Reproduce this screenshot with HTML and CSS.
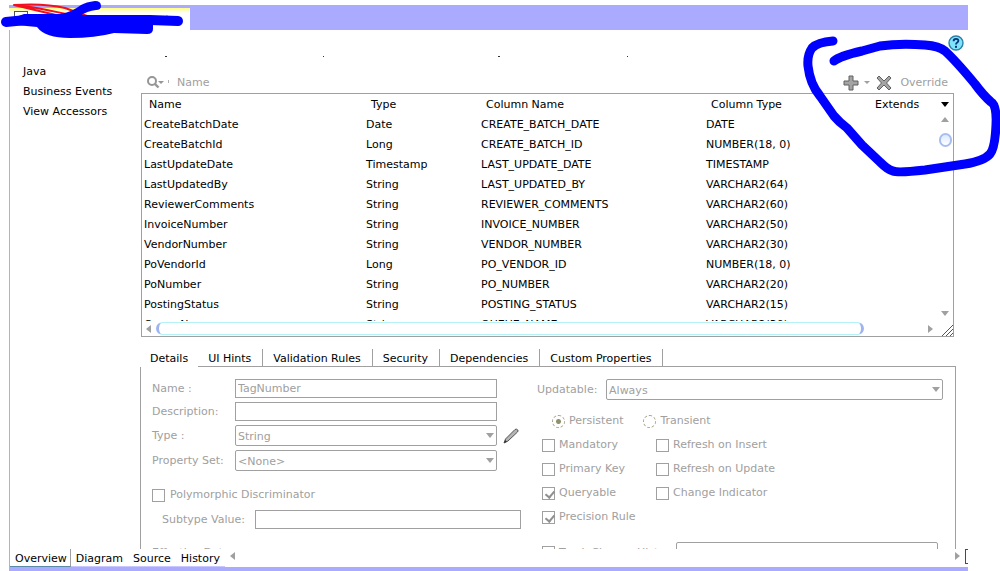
FILE: index.html
```
<!DOCTYPE html>
<html lang="en">
<head>
    <meta charset="UTF-8">
    <title>Entity Object Editor</title>
    <link rel="stylesheet" href="styles.css">
</head>
<body>
    <div class="editor">
        <header class="title-bar">
            <div class="file-tab">
                <svg width="14" height="14" viewBox="0 0 14 14"><rect x="0.5" y="0.5" width="13" height="13" fill="#fff" stroke="#555"/></svg>
            </div>
        </header>

        <main class="page">
            <div class="page-head">
                <button class="icon-btn" aria-label="Help">
                    <svg width="16" height="16" viewBox="0 0 16 16">
                        <circle cx="8" cy="8" r="7" fill="#7fe4fa" stroke="#2b7fa8" stroke-width="1.4"/>
                        <path d="M5.6 6.2Q5.6 3.8 8 3.8Q10.4 3.8 10.4 5.8Q10.4 7 9 7.7Q8 8.2 8 9.6" fill="none" stroke="#06357a" stroke-width="1.8"/>
                        <rect x="7" y="10.8" width="2" height="2" fill="#06357a"/>
                    </svg>
                </button>
            </div>

            <div class="columns">
                <nav class="sections">
                    <a href="#java">Java</a>
                    <a href="#events">Business Events</a>
                    <a href="#accessors">View Accessors</a>
                </nav>

                <div class="content">
                    <div class="toolbar">
                        <button class="icon-btn" aria-label="Search by">
                            <svg width="26" height="16" viewBox="0 0 26 16">
                                <circle cx="6" cy="6" r="4" fill="none" stroke="#969696" stroke-width="2"/>
                                <path d="M9 9L12.5 12.5" stroke="#969696" stroke-width="2.4"/>
                                <path d="M12 6H18L15 9Z" fill="#969696"/>
                                <path d="M22.5 5V8" stroke="#b0b0b0"/>
                            </svg>
                        </button>
                        <span class="search-hint">Name</span>
                        <button class="icon-btn" aria-label="Add">
                            <svg width="28" height="16" viewBox="0 0 28 16">
                                <path d="M6 1H10V6H15V10H10V15H6V10H1V6H6Z" fill="#a4a4a4" stroke="#606060"/>
                                <path d="M21 6H27L24 9Z" fill="#a0a0a0"/>
                            </svg>
                        </button>
                        <button class="icon-btn" aria-label="Remove">
                            <svg width="16" height="16" viewBox="0 0 16 16">
                                <path d="M1 3L3 1L8 6L13 1L15 3L10.5 8L15 13L13 15L8 10L3 15L1 13L5.5 8Z" fill="#a4a4a4" stroke="#606060"/>
                            </svg>
                        </button>
                        <button class="text-btn" disabled>Override</button>
                    </div>

                    <div class="grid-box">
                        <div class="grid-main">
                            <div class="rows">
                                <table class="attributes">
                                    <colgroup>
                                        <col class="col-name"><col class="col-type"><col class="col-column"><col class="col-sql"><col>
                                    </colgroup>
                                    <thead>
                                        <tr><th>Name</th><th>Type</th><th>Column Name</th><th>Column Type</th><th>Extends</th></tr>
                                    </thead>
                                    <tbody>
                                        <tr><td>CreateBatchDate</td><td>Date</td><td>CREATE_BATCH_DATE</td><td>DATE</td><td></td></tr>
                                        <tr><td>CreateBatchId</td><td>Long</td><td>CREATE_BATCH_ID</td><td>NUMBER(18, 0)</td><td></td></tr>
                                        <tr><td>LastUpdateDate</td><td>Timestamp</td><td>LAST_UPDATE_DATE</td><td>TIMESTAMP</td><td></td></tr>
                                        <tr><td>LastUpdatedBy</td><td>String</td><td>LAST_UPDATED_BY</td><td>VARCHAR2(64)</td><td></td></tr>
                                        <tr><td>ReviewerComments</td><td>String</td><td>REVIEWER_COMMENTS</td><td>VARCHAR2(60)</td><td></td></tr>
                                        <tr><td>InvoiceNumber</td><td>String</td><td>INVOICE_NUMBER</td><td>VARCHAR2(50)</td><td></td></tr>
                                        <tr><td>VendorNumber</td><td>String</td><td>VENDOR_NUMBER</td><td>VARCHAR2(30)</td><td></td></tr>
                                        <tr><td>PoVendorId</td><td>Long</td><td>PO_VENDOR_ID</td><td>NUMBER(18, 0)</td><td></td></tr>
                                        <tr><td>PoNumber</td><td>String</td><td>PO_NUMBER</td><td>VARCHAR2(20)</td><td></td></tr>
                                        <tr><td>PostingStatus</td><td>String</td><td>POSTING_STATUS</td><td>VARCHAR2(15)</td><td></td></tr>
                                        <tr><td>QueueName</td><td>String</td><td>QUEUE_NAME</td><td>VARCHAR2(30)</td><td></td></tr>
                                    </tbody>
                                </table>
                            </div>
                            <div class="v-scroll">
                                <i class="arrow down dark"></i>
                                <i class="arrow up"></i>
                                <i class="v-thumb"></i>
                                <i class="arrow down last"></i>
                            </div>
                        </div>
                        <div class="h-scroll">
                            <i class="arrow left"></i>
                            <div class="h-track"><i class="h-thumb"></i></div>
                            <i class="arrow right"></i>
                            <svg class="grip" width="12" height="12" viewBox="0 0 12 12"><path d="M1 12L12 1M5 12L12 5M9 12L12 9" stroke="#555"/></svg>
                        </div>
                    </div>

                    <div class="tabs">
                        <button class="tab active">Details</button>
                        <button class="tab">UI Hints</button>
                        <button class="tab">Validation Rules</button>
                        <button class="tab">Security</button>
                        <button class="tab">Dependencies</button>
                        <button class="tab">Custom Properties</button>
                    </div>

                    <form class="details">
                        <div class="left">
                            <div class="field">
                                <label for="name">Name :</label>
                                <input type="text" id="name" value="TagNumber" disabled>
                            </div>
                            <div class="field">
                                <label for="description">Description:</label>
                                <input type="text" id="description" disabled>
                            </div>
                            <div class="field">
                                <label for="type">Type :</label>
                                <div class="drop"><select id="type" disabled><option>String</option></select></div>
                                <button type="button" class="icon-btn edit" aria-label="Edit type">
                                    <svg width="16" height="16" viewBox="0 0 16 16">
                                        <path d="M1 15L2.5 11L12 1.5Q13.5 0.5 14.8 2Q15.5 3 14.5 4L5 13Z" fill="#b5b5b5" stroke="#555"/>
                                        <path d="M1 15L2.2 12L4 13.8Z" fill="#333"/>
                                    </svg>
                                </button>
                            </div>
                            <div class="field">
                                <label for="propertySet">Property Set:</label>
                                <div class="drop"><select id="propertySet" disabled><option>&lt;None&gt;</option></select></div>
                            </div>
                            <label class="check poly"><input type="checkbox" disabled>Polymorphic Discriminator</label>
                            <div class="field subtype">
                                <label for="subtype">Subtype Value:</label>
                                <input type="text" id="subtype" disabled>
                            </div>
                            <div class="effective">Effective Date</div>
                        </div>

                        <div class="right">
                            <div class="field updatable">
                                <label for="updatable">Updatable:</label>
                                <div class="drop"><select id="updatable" disabled><option>Always</option></select></div>
                            </div>
                            <div class="radios">
                                <label class="check"><input type="radio" name="store" checked disabled>Persistent</label>
                                <label class="check"><input type="radio" name="store" disabled>Transient</label>
                            </div>
                            <div class="checks">
                                <label class="check"><input type="checkbox" disabled>Mandatory</label>
                                <label class="check"><input type="checkbox" disabled>Refresh on Insert</label>
                                <label class="check"><input type="checkbox" disabled>Primary Key</label>
                                <label class="check"><input type="checkbox" disabled>Refresh on Update</label>
                                <label class="check"><input type="checkbox" checked disabled>Queryable</label>
                                <label class="check"><input type="checkbox" disabled>Change Indicator</label>
                                <label class="check"><input type="checkbox" checked disabled>Precision Rule</label>
                            </div>
                            <div class="history">
                                <label class="check"><input type="checkbox" disabled>Track Change History</label>
                                <div class="drop"><select aria-label="History column" disabled><option></option></select></div>
                            </div>
                        </div>
                    </form>
                </div>
            </div>
        </main>

        <footer class="view-tabs">
            <button class="view active">Overview</button>
            <button class="view">Diagram</button>
            <button class="view">Source</button>
            <button class="view">History</button>
            <i class="arrow left"></i>
            <i class="arrow right"></i>
            <i class="split"></i>
        </footer>
    </div>

    <!-- pen marks drawn over the window -->
    <svg class="pen" width="1000" height="200" viewBox="0 0 1000 200" fill="none" stroke-linecap="round" stroke-linejoin="round">
        <path d="M107 15.5H109M167 15.5V18M165 56.5H167M323 56.5H324M498 56.5H500M627 56.5H628" stroke="#333" stroke-linecap="butt"/>
        <path d="M14 5Q45 3 65 8L87 16M14 5L56 15M14 5Q30 6 66 14" stroke="#f01020" stroke-width="2"/>
        <path d="M6 22L26 20H150L178 21" stroke="#00f" stroke-width="10"/>
        <path d="M16 17L24 14H60Q72 12 81 5Q86 2 95 1Q101 1 101 6Q101 10 96 10Q87 11 80 16H149Q153 16 153 20V29Q153 34 147 34L114 33Q95 38 70 38Q45 38 37 27L16 25Z" fill="#00f"/>
        <path d="M833 41Q818 42 812 48Q807 55 808 66Q810 84 820 96L834 116Q839 122 847 128L862 145L880 162Q888 170 893 171Q898 173 925 170L965 164Q984 161 990 154Q995 148 996 125Q997 105 991 102Q983 95 975 84Q956 61 945 51Q939 46 925 45Q900 43 880 46L862 51Q840 56 834 61" stroke="#00f" stroke-width="9"/>
    </svg>
</body>
</html>
```
FILE: styles.css
```
* {
    box-sizing: border-box;
}
body {
    margin: 0;
    background: #fff;
    color: #000;
    font-family: "DejaVu Sans", Verdana, sans-serif;
    font-size: 11px;
    line-height: 20px;
}
button, input, select {
    font: inherit;
    color: inherit;
    margin: 0;
    padding: 0;
    border: none;
    background: none;
}
svg {
    display: block;
}
.editor {
    display: flex;
    flex-direction: column;
    height: 100vh;
    padding: 5px 32px 0 9px;
    overflow: hidden;
}

/* top strip */
.title-bar {
    flex: none;
    height: 25px;
    padding-top: 3px;
    background: #aaaaff;
}
.file-tab {
    width: 181px;
    height: 22px;
    padding: 3px 5px;
    background: linear-gradient(#ffff80, #fff 5px);
}

/* page */
.page {
    flex: 1;
    min-height: 0;
    overflow: hidden;
    border-left: 1px solid #aaaaff;
}
.page-head {
    display: flex;
    justify-content: flex-end;
    align-items: flex-start;
    height: 42px;
    padding: 5px 4px 0 0;
}
.columns {
    display: flex;
    padding-right: 12px;
}
.sections {
    flex: none;
    display: flex;
    flex-direction: column;
    width: 130px;
    margin-top: -10px;
    padding-left: 13px;
}
.sections a {
    color: #000;
    text-decoration: none;
}
.content {
    flex: 1;
    min-width: 0;
}
.toolbar {
    display: flex;
    align-items: center;
    height: 21px;
    padding: 0 8px 0 6px;
    color: #a0a0a0;
}
.search-hint {
    margin-right: auto;
}
.toolbar .icon-btn {
    margin-right: 5px;
}
.toolbar .text-btn {
    margin-left: 3px;
}

/* attribute grid */
.grid-box {
    margin: 0 2px 0 1px;
    border: 1px solid #a0a0a0;
}
.grid-main {
    display: flex;
    height: 227px;
}
.rows {
    flex: 1;
    overflow: hidden;
}
.attributes {
    width: 100%;
    table-layout: fixed;
    border-collapse: collapse;
}
.col-name {
    width: 222px;
}
.col-type {
    width: 115px;
}
.col-column {
    width: 225px;
}
.col-sql {
    width: 164px;
}
.attributes th, .attributes td {
    padding: 2px 2px 0;
    font-weight: normal;
    line-height: 18px;
    text-align: left;
    white-space: nowrap;
}
.attributes th {
    padding-left: 7px;
}
.v-scroll {
    display: flex;
    flex-direction: column;
    align-items: center;
    width: 16px;
    padding: 8px 0 5px;
}
.v-thumb {
    width: 13px;
    height: 14px;
    margin-top: 11px;
    border: 2px solid #a9bdf0;
    border-radius: 7px;
    background: linear-gradient(#dceaff, #fff);
}
.arrow {
    flex: none;
    width: 0;
    height: 0;
    border: 4px solid transparent;
}
.arrow.down {
    border-top: 5px solid #a0a0a0;
    border-bottom: none;
}
.arrow.up {
    border-bottom: 5px solid #a0a0a0;
    border-top: none;
    margin-top: 10px;
}
.arrow.left {
    border-right: 5px solid #a0a0a0;
    border-left: none;
}
.arrow.right {
    border-left: 5px solid #a0a0a0;
    border-right: none;
}
.arrow.dark {
    border-top-color: #000;
}
.arrow.last {
    margin-top: auto;
}
.h-scroll {
    display: flex;
    align-items: center;
    height: 15px;
    padding-left: 4px;
}
.h-track {
    flex: 1;
    margin: 0 2px 0 5px;
}
.h-thumb {
    display: block;
    width: 92%;
    height: 13px;
    border: 1px solid #b4f2f7;
    border-left: 3px solid #9db4ee;
    border-right: 3px solid #9db4ee;
    border-radius: 7px;
}
.grip {
    align-self: flex-end;
    margin-left: 8px;
}

/* detail tabs */
.tabs {
    display: flex;
    margin-top: 12px;
}
.tabs::after {
    content: "";
    flex: 1;
    border-bottom: 1px solid #a0a0a0;
}
.tab {
    height: 18px;
    padding: 2px 11px 0 10px;
    border-right: 1px solid #a0a0a0;
    border-bottom: 1px solid #a0a0a0;
    line-height: 16px;
    white-space: nowrap;
}
.tab.active {
    padding-right: 9px;
    border-color: transparent;
}
.details {
    display: grid;
    grid-template-columns: 10fr 11fr;
    gap: 16px;
    padding: 12px 12px 0 11px;
    border: 1px solid #a0a0a0;
    border-top: none;
    border-bottom: none;
    color: #a0a0a0;
}
.left, .right {
    min-width: 0;
}
.field {
    display: flex;
    align-items: center;
    margin-bottom: 4px;
    padding-right: 24px;
}
.field label {
    flex: none;
    width: 83px;
    line-height: 19px;
    white-space: nowrap;
}
input[type="text"] {
    flex: 1;
    min-width: 0;
    height: 19px;
    padding: 0 2px;
    border: 1px solid #a0a0a0;
}
.drop {
    position: relative;
    flex: 1;
    height: 21px;
}
.drop::after {
    content: "";
    position: absolute;
    top: 8px;
    right: 3px;
    border: 4px solid transparent;
    border-top: 5px solid #a0a0a0;
    border-bottom: none;
}
select {
    display: block;
    width: 100%;
    height: 21px;
    padding: 1px 2px 0;
    border: 1px solid #a0a0a0;
    border-radius: 2px;
    appearance: none;
}
select:disabled, input:disabled, button:disabled {
    opacity: 1;
    color: #a0a0a0;
}
.edit {
    margin: 0 -22px 0 6px;
}
.check {
    display: flex;
    align-items: center;
    gap: 4px;
    white-space: nowrap;
}
.check input {
    flex: none;
    width: 13px;
    height: 13px;
    border: 1px solid #a0a0a0;
    appearance: none;
}
.check input[type="checkbox"]:checked::before {
    content: "";
    display: block;
    width: 4px;
    height: 7px;
    margin: 1px 0 0 4px;
    border: solid #909090;
    border-width: 0 2px 2px 0;
    transform: rotate(40deg);
}
.check input[type="radio"] {
    border: 1px dashed #a0a080;
    border-radius: 7px;
}
.check input[type="radio"]:checked {
    background: radial-gradient(circle, #909070 2px, #fff 3px);
}
.poly {
    gap: 5px;
    margin-top: 14px;
}
.subtype {
    margin-top: 5px;
    padding: 0 0 0 10px;
}
.subtype label {
    width: 93px;
}
.effective {
    margin-top: 14px;
}
.updatable {
    margin: 0;
    padding: 0;
}
.updatable label {
    width: 69px;
}
.radios {
    display: flex;
    gap: 20px;
    margin-top: 9px;
    padding-left: 15px;
    line-height: 24px;
}
.checks {
    display: grid;
    grid-template-columns: 114px 1fr;
    padding-left: 5px;
    line-height: 24px;
}
.history {
    display: flex;
    gap: 8px;
    margin-top: 13px;
    padding: 0 5px;
}
.history .check {
    width: 126px;
}

/* bottom tabs */
.view-tabs {
    flex: none;
    display: flex;
    align-items: flex-start;
    height: 22px;
    border-left: 1px solid #aaaaff;
    border-bottom: 4px solid #aaaaff;
}
.view {
    height: 18px;
    padding: 2px 5px 0;
    border-bottom: 1px solid #c8c8ff;
    line-height: 16px;
}
.view.active {
    padding-right: 3px;
    border-bottom-color: #5a8ca8;
    border-right: 1px solid #a0a0a0;
}
.view-tabs .arrow {
    margin-top: 3px;
}
.view-tabs .left {
    margin-left: 5px;
}
.view-tabs .right {
    margin-left: auto;
}
.split {
    width: 3px;
    height: 15px;
    margin-left: 5px;
    border: 1px solid #2a5080;
    border-right: none;
}

.pen {
    position: absolute;
    top: 0;
    left: 0;
    pointer-events: none;
}
```
